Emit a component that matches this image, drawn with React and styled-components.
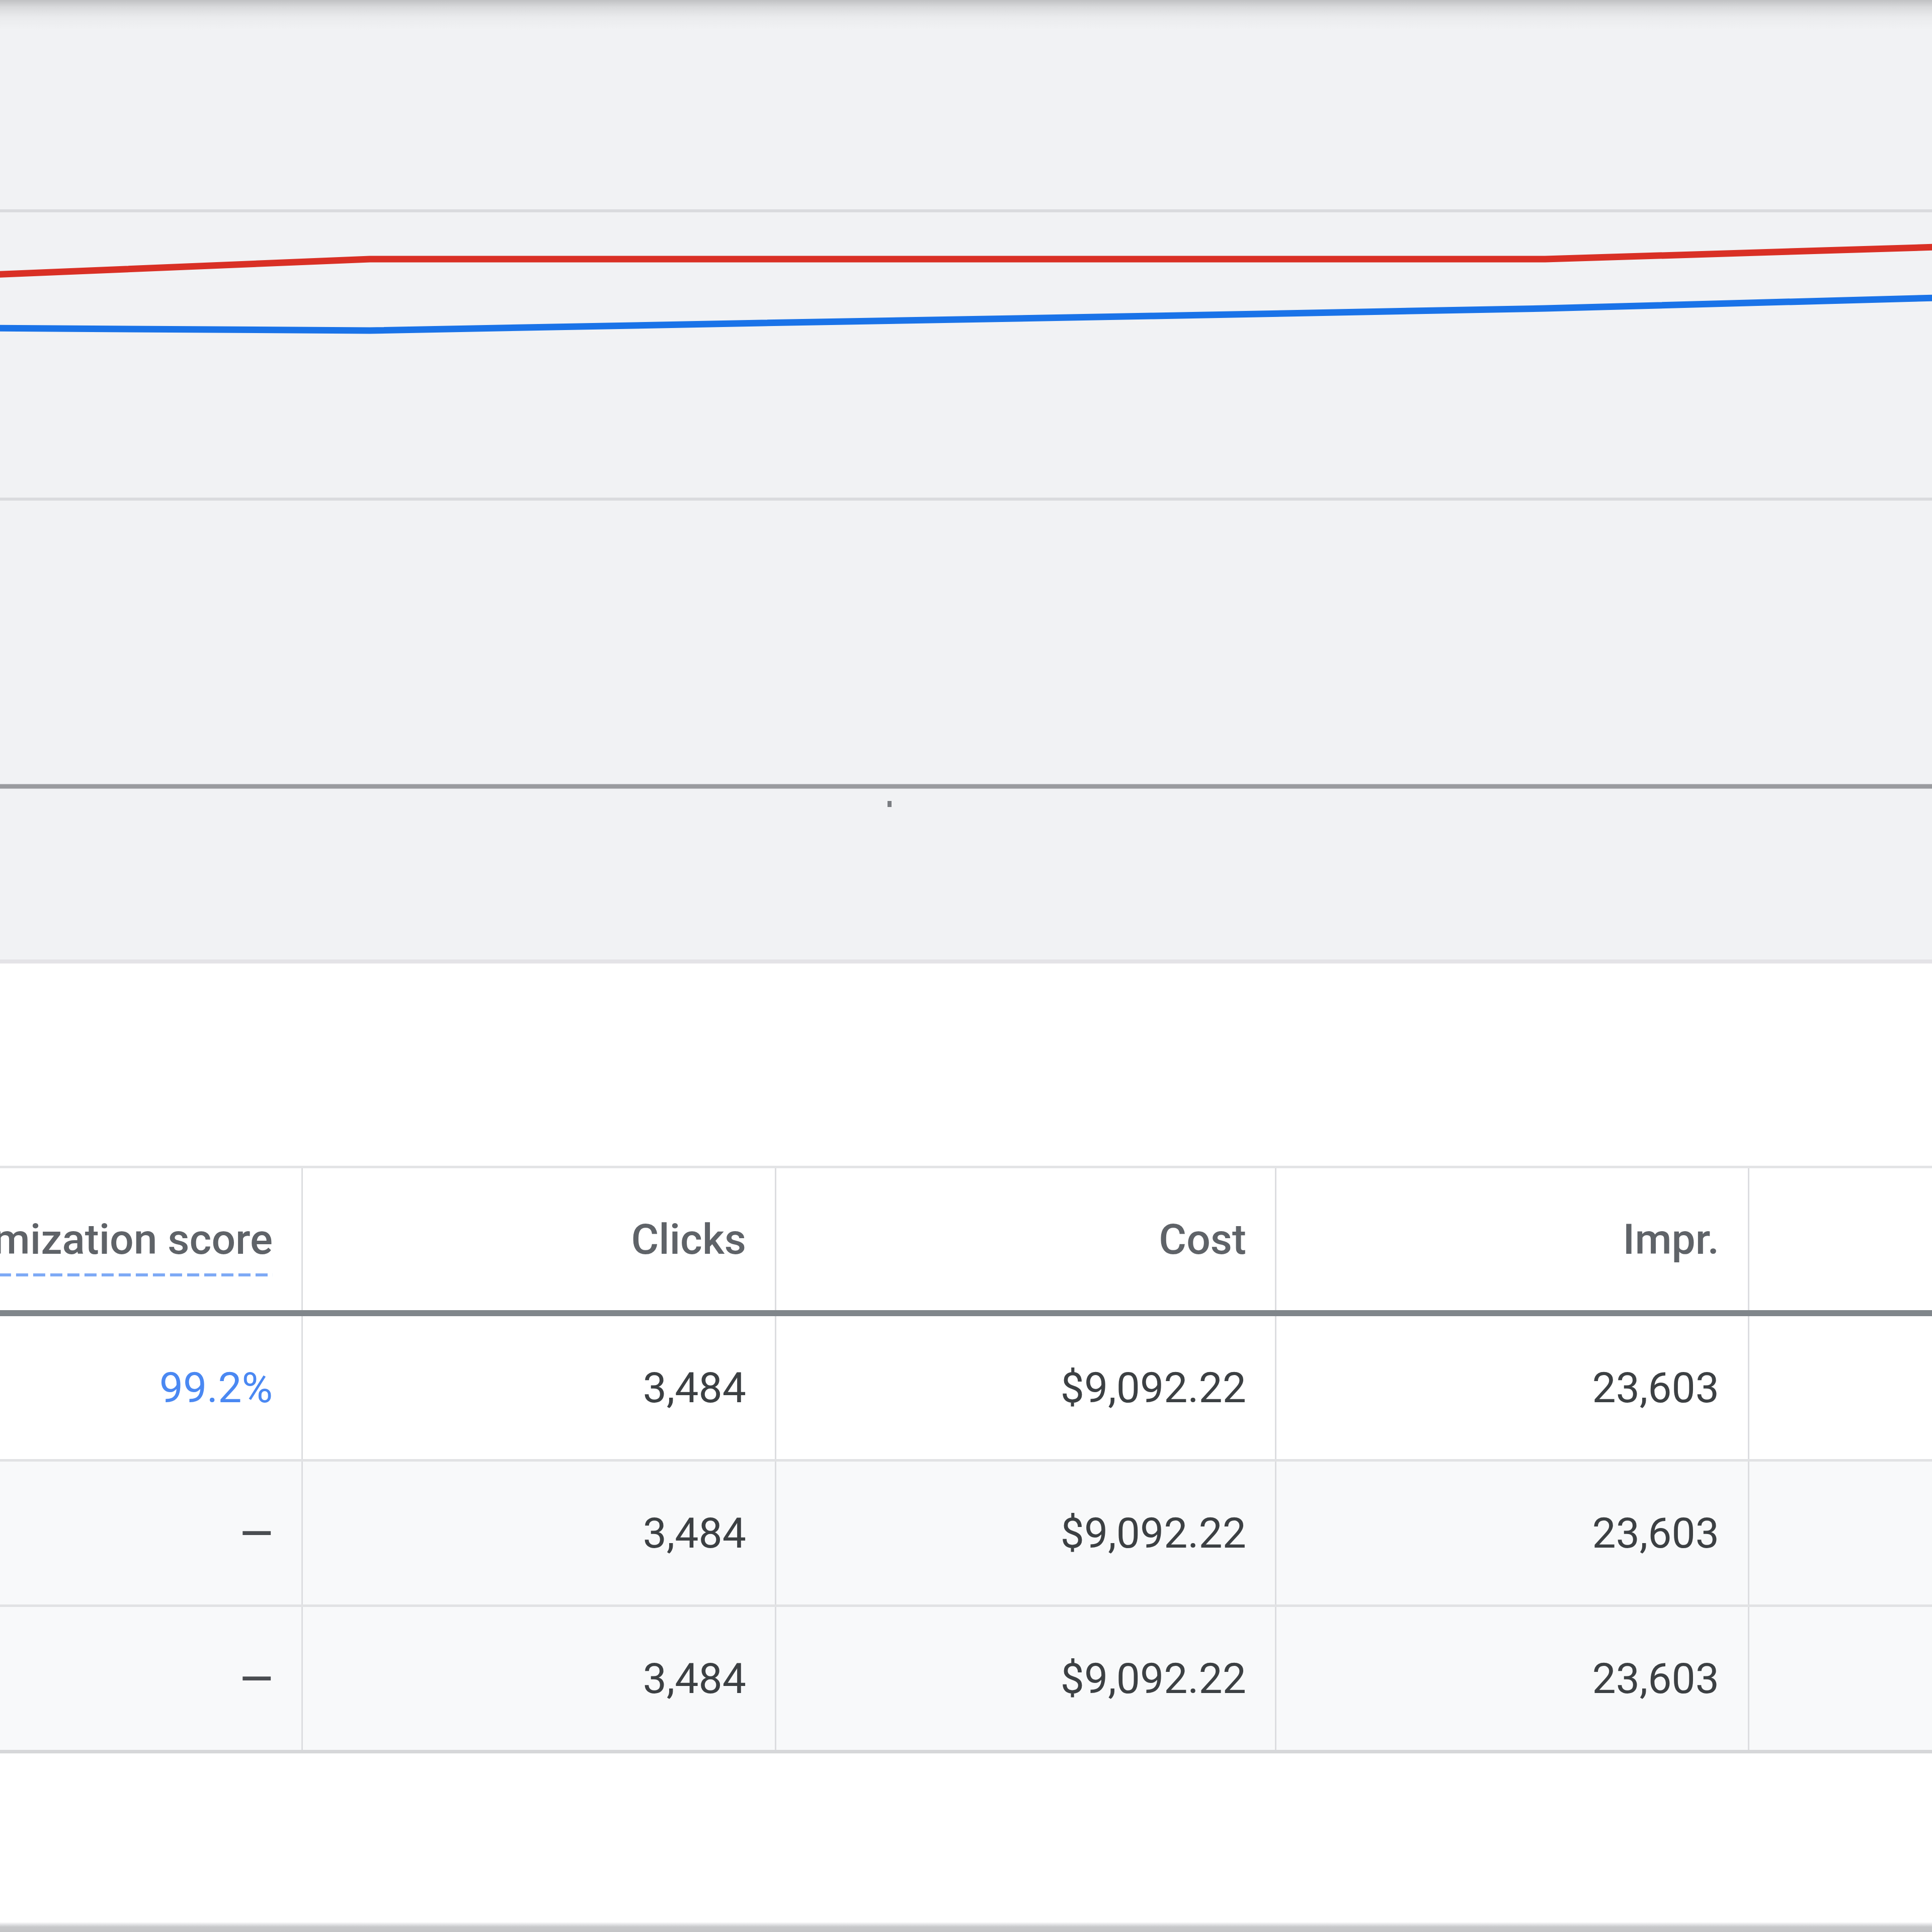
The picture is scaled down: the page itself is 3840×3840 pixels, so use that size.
import React from 'react';
import styled, { createGlobalStyle } from 'styled-components';

const GlobalStyle = createGlobalStyle`
  html, body {
    margin: 0;
    padding: 0;
    background: #ffffff;
  }
  body {
    font-family: Roboto, "Noto Sans", "Liberation Sans", sans-serif;
  }
`;

const Page = styled.div`
  width: 3840px;
  height: 3840px;
  overflow: hidden;
  display: flex;
  flex-direction: column;
  background: #ffffff;
`;

const ChartPanel = styled.section`
  flex: 0 0 auto;
  height: 1907px;
  border-bottom: 8px solid #e4e3e7;
  background: linear-gradient(
    to bottom,
    #c0c1c3 0px,
    #d9dadc 14px,
    #eaebed 34px,
    #f1f2f4 60px,
    #f1f2f4 100%
  );
  svg {
    display: block;
  }
`;

const Table = styled.div`
  margin-top: 402px;
  display: flex;
  flex-direction: column;
`;

const Row = styled.div`
  display: grid;
  grid-template-columns: 602px 941px 994px 940px 1fr;
  height: ${({ $head }) => ($head ? '282px' : '284px')};
  background: ${({ $shade }) => ($shade ? '#f8f9fa' : '#ffffff')};
  border-top: ${({ $head }) => ($head ? '5px solid #e3e4e6' : 'none')};
  border-bottom: ${({ $head, $last }) =>
    $head ? '12px solid #80868b' : $last ? '7px solid #d6d7d9' : '5px solid #e1e2e4'};
`;

const Cell = styled.div`
  display: flex;
  align-items: center;
  justify-content: flex-end;
  overflow: hidden;
  white-space: nowrap;
  padding-right: 57px;
  border-right: ${({ $end }) => ($end ? 'none' : '3px solid #dcdde0')};
  font-size: 84px;
  font-weight: ${({ $head }) => ($head ? 500 : 400)};
  color: ${({ $head, $link }) => ($head ? '#5f6368' : $link ? '#4a88f2' : '#3c4043')};
`;

const Dash = styled.span`
  font-weight: 500;
  color: #4a4d51;
`;

const DottedLabel = styled.span`
  flex: 0 0 auto;
  padding-bottom: 24px;
  margin-bottom: -24px;
  background-image: linear-gradient(to right, #7eaaf5 70%, transparent 0);
  background-size: 34px 6px;
  background-repeat: repeat-x;
  background-position: right bottom;
`;

const Rest = styled.div`
  flex: 1;
`;

const BottomEdge = styled.div`
  flex: 0 0 auto;
  height: 20px;
  background: linear-gradient(to bottom, #ffffff 0px, #e2e3e5 5px, #c7c8ca 10px, #c3c4c6 100%);
`;

const Chart = () => (
  <svg width="3840" height="1907" viewBox="0 0 3840 1907">
    <line x1="0" y1="419" x2="3840" y2="419" stroke="#dadbde" strokeWidth="6" />
    <line x1="0" y1="992" x2="3840" y2="992" stroke="#dadbde" strokeWidth="6" />
    <line x1="0" y1="1563" x2="3840" y2="1563" stroke="#9a9b9f" strokeWidth="9" />
    <rect x="1764" y="1592" width="8" height="12" fill="#7a7d81" />
    <polyline
      points="-43,547 735,515 1514,515 2292,515 3071,515 3850,491"
      fill="none"
      stroke="#d93025"
      strokeWidth="13"
      strokeLinejoin="round"
    />
    <polyline
      points="-43,652 735,657 1514,642 2292,628 3071,613 3850,592"
      fill="none"
      stroke="#1a73e8"
      strokeWidth="13"
      strokeLinejoin="round"
    />
  </svg>
);

const rows = [
  { score: '99.2%', link: true, clicks: '3,484', cost: '$9,092.22', impr: '23,603' },
  { score: null, clicks: '3,484', cost: '$9,092.22', impr: '23,603' },
  { score: null, clicks: '3,484', cost: '$9,092.22', impr: '23,603' },
];

export default function App() {
  return (
    <>
      <GlobalStyle />
      <Page>
        <ChartPanel>
          <Chart />
        </ChartPanel>

        <Table>
          <Row $head>
            <Cell $head>
              <DottedLabel>Optimization score</DottedLabel>
            </Cell>
            <Cell $head>Clicks</Cell>
            <Cell $head>Cost</Cell>
            <Cell $head>Impr.</Cell>
            <Cell $head $end />
          </Row>
          {rows.map((r, i) => (
            <Row key={i} $shade={i > 0} $last={i === rows.length - 1}>
              <Cell $link={r.link}>{r.score ?? <Dash>—</Dash>}</Cell>
              <Cell>{r.clicks}</Cell>
              <Cell>{r.cost}</Cell>
              <Cell>{r.impr}</Cell>
              <Cell $end />
            </Row>
          ))}
        </Table>

        <Rest />
        <BottomEdge />
      </Page>
    </>
  );
}
